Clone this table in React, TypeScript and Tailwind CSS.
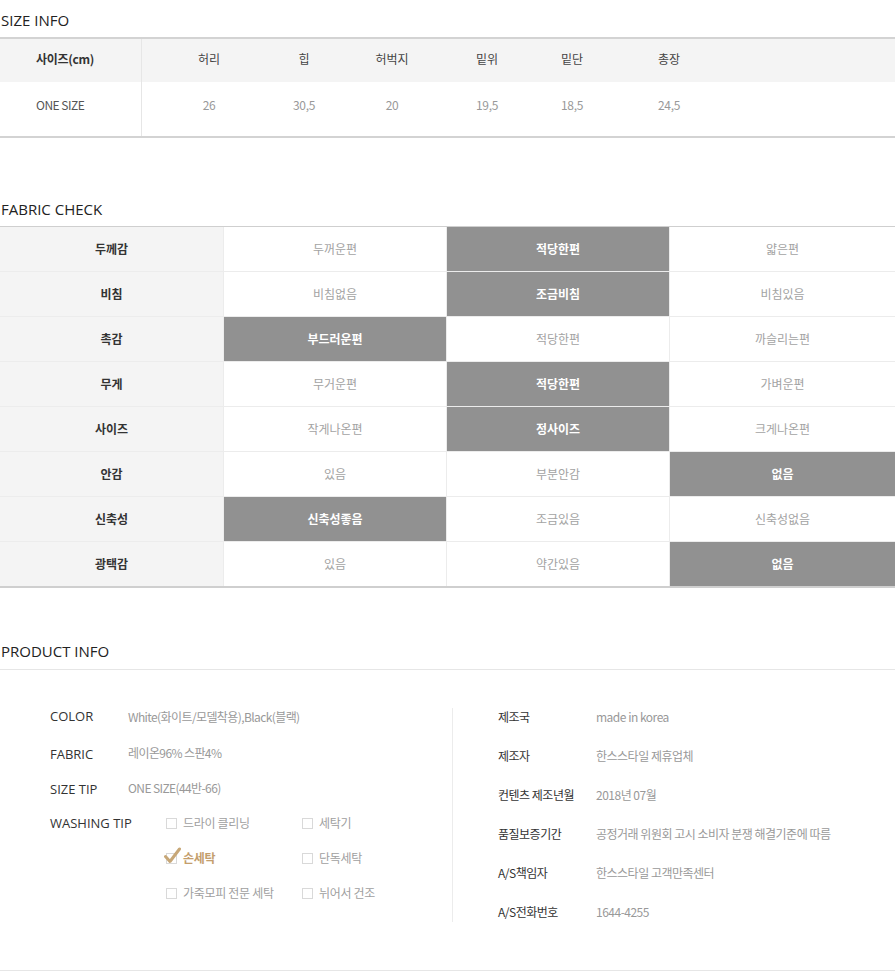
import React from "react";

const ko = { fontFamily: '"Noto Sans CJK KR", "Noto Sans", sans-serif' };
const en = { fontFamily: '"Open Sans", "Noto Sans CJK KR", sans-serif' };

const sizeCols = [
  { h: "허리", v: "26", ml: 27 },
  { h: "힙", v: "30,5", ml: 15 },
  { h: "허벅지", v: "20", ml: 8 },
  { h: "밑위", v: "19,5", ml: 15 },
  { h: "밑단", v: "18,5", ml: 5 },
  { h: "총장", v: "24,5", ml: 17 },
];
const mlClass: Record<number, string> = {
  27: "ml-[27px]",
  15: "ml-[15px]",
  8: "ml-[8px]",
  5: "ml-[5px]",
  17: "ml-[17px]",
};

const fabric: [string, string[], number][] = [
  ["두께감", ["두꺼운편", "적당한편", "얇은편"], 1],
  ["비침", ["비침없음", "조금비침", "비침있음"], 1],
  ["촉감", ["부드러운편", "적당한편", "까슬리는편"], 0],
  ["무게", ["무거운편", "적당한편", "가벼운편"], 1],
  ["사이즈", ["작게나온편", "정사이즈", "크게나온편"], 1],
  ["안감", ["있음", "부분안감", "없음"], 2],
  ["신축성", ["신축성좋음", "조금있음", "신축성없음"], 0],
  ["광택감", ["있음", "약간있음", "없음"], 2],
];

const rightInfo: [string, string][] = [
  ["제조국", "made in korea"],
  ["제조자", "한스스타일 제휴업체"],
  ["컨텐츠 제조년월", "2018년 07월"],
  ["품질보증기간", "공정거래 위원회 고시 소비자 분쟁 해결기준에 따름"],
  ["A/S책임자", "한스스타일 고객만족센터"],
  ["A/S전화번호", "1644-4255"],
];

function Box({ checked }: { checked?: boolean }) {
  return (
    <span className="relative inline-block w-[11px] h-[11px] border border-[#d9d9d9] bg-white shrink-0">
      {checked && (
        <svg
          className="absolute left-[-3px] top-[-7px]"
          width="17"
          height="17"
          viewBox="0 0 17 17"
        >
          <path
            d="M1.5 9.5 L6 14.5 L15.5 2"
            fill="none"
            stroke="#c7a777"
            strokeWidth="3"
            strokeLinecap="round"
            strokeLinejoin="round"
          />
        </svg>
      )}
    </span>
  );
}

function Wash({ label, checked }: { label: string; checked?: boolean }) {
  return (
    <div className="flex items-center gap-[6px] h-[14px]">
      <Box checked={checked} />
      <span
        className={
          checked
            ? "text-[12px] font-bold text-[#c49e6c] tracking-[-0.3px]"
            : "text-[12px] text-[#a0a0a0] tracking-[-0.3px]"
        }
        style={ko}
      >
        {label}
      </span>
    </div>
  );
}

export default function App() {
  return (
    <div className="w-[895px] bg-white text-[#333]" style={ko}>
      {/* SIZE INFO */}
      <div className="h-[37px] pt-[10px] pl-[1px] text-[15px] leading-[20px] text-[#222]" style={en}>
        SIZE INFO
      </div>
      <div className="border-t-2 border-b-2 border-[#d3d3d3]">
        <div className="flex h-[43px] bg-[#f4f4f4] items-center text-[12px] pb-[3px]">
          <div className="w-[142px] h-[43px] mb-[-3px] flex items-center pb-[3px] pl-[36px] font-bold text-[#333] border-r border-[#e6e6e6] tracking-[-0.3px]">
            사이즈(cm)
          </div>
          {sizeCols.map((c) => (
            <div key={c.h} className={`w-[80px] text-center text-[#444] ${mlClass[c.ml]}`}>
              {c.h}
            </div>
          ))}
        </div>
        <div className="flex h-[54px] items-center text-[12px] pb-[9px]">
          <div className="w-[142px] h-[54px] mb-[-9px] pb-[9px] flex items-center pl-[36px] text-[#555] border-r border-[#e6e6e6] tracking-[-0.5px]">
            ONE SIZE
          </div>
          {sizeCols.map((c) => (
            <div
              key={c.h}
              className={`w-[80px] text-center text-[#999] tracking-[-0.3px] ${mlClass[c.ml]}`}
            >
              {c.v}
            </div>
          ))}
        </div>
      </div>

      {/* FABRIC CHECK */}
      <div className="h-[88px] pt-[61px] pl-[1px] text-[15px] leading-[20px] text-[#222]" style={en}>
        FABRIC CHECK
      </div>
      <div className="border-t border-b-2 border-[#cfcfcf]">
        {fabric.map(([label, opts, sel], ri) => (
          <div
            key={label}
            className={`grid grid-cols-[224px_223px_223px_225px] ${
              ri > 0 ? "border-t border-[#ececec] h-[45px]" : "h-[44px]"
            }`}
          >
            <div className="bg-[#f4f4f4] flex items-center justify-center text-[12px] font-bold text-[#333] border-r border-[#ececec]">
              {label}
            </div>
            {opts.map((o, i) => (
              <div
                key={i}
                className={`flex items-center justify-center text-[12px] ${
                  i < 2 ? "border-r border-[#ececec]" : ""
                } ${i === sel ? "bg-[#919191] text-white font-bold" : "bg-white text-[#a3a3a3]"}`}
              >
                {o}
              </div>
            ))}
          </div>
        ))}
      </div>

      {/* PRODUCT INFO */}
      <div className="h-[81px] pt-[53px] pl-[1px] text-[15px] leading-[20px] text-[#222]" style={en}>
        PRODUCT INFO
      </div>
      <div className="border-t border-[#e6e6e6]">
        <div className="flex pt-[38px] h-[301px] border-b border-[#e6e6e6]">
          {/* left */}
          <div className="w-[452px] pl-[50px] flex flex-col">
            <div className="flex items-center h-[18px]">
              <div className="w-[78px] text-[13px] text-[#333]" style={en}>COLOR</div>
              <div className="text-[12px] text-[#999] tracking-[-0.6px]">White(화이트/모델착용),Black(블랙)</div>
            </div>
            <div className="flex items-center h-[18px] mt-[18px]">
              <div className="w-[78px] text-[13px] text-[#333] pt-[3px]" style={en}>FABRIC</div>
              <div className="text-[12px] text-[#999] tracking-[-0.6px]">레이온96% 스판4%</div>
            </div>
            <div className="flex items-center h-[18px] mt-[17px]">
              <div className="w-[78px] text-[13px] text-[#333] pt-[3px]" style={en}>SIZE TIP</div>
              <div className="text-[12px] text-[#999] tracking-[-0.6px]">ONE SIZE(44반-66)</div>
            </div>
            <div className="flex mt-[17px]">
              <div className="w-[116px] text-[13px] text-[#333] h-[18px] flex items-center pt-[2px]" style={en}>
                WASHING TIP
              </div>
              <div className="grid grid-cols-[136px_120px] gap-y-[21px] pt-[2px]">
                <Wash label="드라이 클리닝" />
                <Wash label="세탁기" />
                <Wash label="손세탁" checked />
                <Wash label="단독세탁" />
                <Wash label="가죽모피 전문 세탁" />
                <Wash label="뉘어서 건조" />
              </div>
            </div>
          </div>
          {/* divider */}
          <div className="w-px h-[214px] bg-[#ececec]" />
          {/* right */}
          <div className="pl-[45px] flex flex-col gap-[21px]">
            {rightInfo.map(([k, v]) => (
              <div key={k} className="flex items-center h-[18px]">
                <div className="w-[98px] text-[12px] text-[#333] tracking-[-0.5px]">{k}</div>
                <div className="text-[12px] text-[#999] tracking-[-0.5px]">{v}</div>
              </div>
            ))}
          </div>
        </div>
      </div>
    </div>
  );
}
